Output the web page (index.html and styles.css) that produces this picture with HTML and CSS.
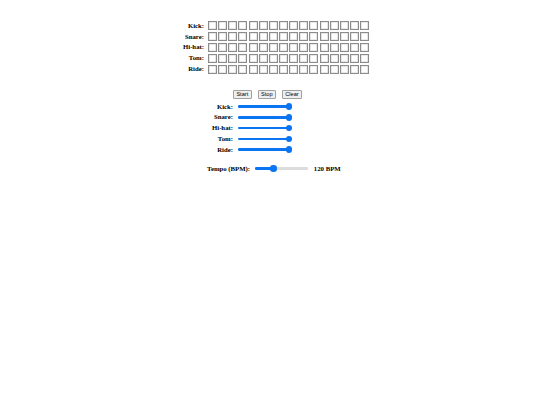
FILE: index.html
```html
<!DOCTYPE html>
<html>
<head>
<meta charset="utf-8">
<link rel="stylesheet" href="styles.css">
</head>
<body>
<div class="app">
  <div class="grid">
    <div class="row"><span class="label">Kick:</span><div class="cells"><i></i><i></i><i></i><i></i><i></i><i></i><i></i><i></i><i></i><i></i><i></i><i></i><i></i><i></i><i></i><i></i></div></div>
    <div class="row"><span class="label">Snare:</span><div class="cells"><i></i><i></i><i></i><i></i><i></i><i></i><i></i><i></i><i></i><i></i><i></i><i></i><i></i><i></i><i></i><i></i></div></div>
    <div class="row"><span class="label">Hi-hat:</span><div class="cells"><i></i><i></i><i></i><i></i><i></i><i></i><i></i><i></i><i></i><i></i><i></i><i></i><i></i><i></i><i></i><i></i></div></div>
    <div class="row"><span class="label">Tom:</span><div class="cells"><i></i><i></i><i></i><i></i><i></i><i></i><i></i><i></i><i></i><i></i><i></i><i></i><i></i><i></i><i></i><i></i></div></div>
    <div class="row"><span class="label">Ride:</span><div class="cells"><i></i><i></i><i></i><i></i><i></i><i></i><i></i><i></i><i></i><i></i><i></i><i></i><i></i><i></i><i></i><i></i></div></div>
  </div>
  <div class="controls">
    <button class="btn">Start</button><button class="btn">Stop</button><button class="btn">Clear</button>
  </div>
  <div class="volumes">
    <div class="vrow"><label class="vlabel">Kick:</label><input class="slider" type="range" min="0" max="100" value="100" style="--fill:100%"></div>
    <div class="vrow"><label class="vlabel">Snare:</label><input class="slider" type="range" min="0" max="100" value="100" style="--fill:100%"></div>
    <div class="vrow"><label class="vlabel">Hi-hat:</label><input class="slider" type="range" min="0" max="100" value="100" style="--fill:100%"></div>
    <div class="vrow"><label class="vlabel">Tom:</label><input class="slider" type="range" min="0" max="100" value="100" style="--fill:100%"></div>
    <div class="vrow"><label class="vlabel">Ride:</label><input class="slider" type="range" min="0" max="100" value="100" style="--fill:100%"></div>
  </div>
  <div class="tempo">
    <label class="tlabel">Tempo (BPM):</label><input class="slider tslider" type="range" min="60" max="240" value="120" style="--fill:35%"><span class="tval">120 BPM</span>
  </div>
</div>
</body>
</html>
```
FILE: styles.css
```css
html, body {
  margin: 0;
  padding: 0;
  background: #fff;
}
body {
  font-family: "Liberation Serif", "Times New Roman", serif;
  font-size: 6.75px;
  color: #000;
}
.app {
  width: 202.5px;
  margin: 0 auto;
  padding-top: 21px;
}
.grid {
  display: flex;
  flex-direction: column;
  gap: 1.5px;
}
.row {
  display: flex;
  align-items: center;
  height: 9.4px;
}
.label, .vlabel, .tlabel, .tval {
  font-weight: bold;
  line-height: 8px;
  white-space: nowrap;
}
.label {
  width: 35.25px;
  margin-right: 4px;
  text-align: right;
}
.cells {
  display: flex;
  gap: 1.15px;
}
.cells i {
  display: block;
  box-sizing: border-box;
  width: 9px;
  height: 9.4px;
  border: 1px solid #8c8c8c;
  box-shadow: inset 0 0 0 0.6px #d6d6d6;
  background: #fff;
}
.controls {
  display: flex;
  gap: 6px;
  margin-top: 16px;
  padding-left: 64.25px;
}
.btn {
  margin: 0;
  padding: 0.3px 2.4px;
  font-family: "Liberation Sans", Arial, sans-serif;
  font-size: 5.6px;
  line-height: 6.6px;
  color: #000;
  background: #efefef;
  border: 1px solid #a0a0a0;
  border-radius: 1px;
}
.volumes {
  display: flex;
  flex-direction: column;
  gap: 2.25px;
  margin-top: 3.25px;
}
.vrow {
  display: flex;
  align-items: center;
  height: 8.5px;
}
.vlabel {
  width: 64.25px;
  margin-right: 5px;
  text-align: right;
}
.slider {
  -webkit-appearance: none;
  appearance: none;
  width: 54px;
  height: 6.75px;
  margin: 0;
  padding: 0;
  background: transparent;
}
.slider::-webkit-slider-runnable-track {
  height: 2.4px;
  border-radius: 1.2px;
  background: linear-gradient(to right, #0a74f2 var(--fill), #dcdcdc var(--fill));
}
.slider::-webkit-slider-thumb {
  -webkit-appearance: none;
  appearance: none;
  width: 6.4px;
  height: 6.4px;
  margin-top: -2px;
  border-radius: 50%;
  background: #0a74f2;
  border: none;
}
.tempo {
  display: flex;
  align-items: center;
  height: 8.5px;
  margin-top: 10.5px;
  padding-left: 38.25px;
}
.tlabel {
  margin-right: 4.8px;
}
.tslider {
  width: 53px;
}
.tval {
  margin-left: 6px;
}
```
